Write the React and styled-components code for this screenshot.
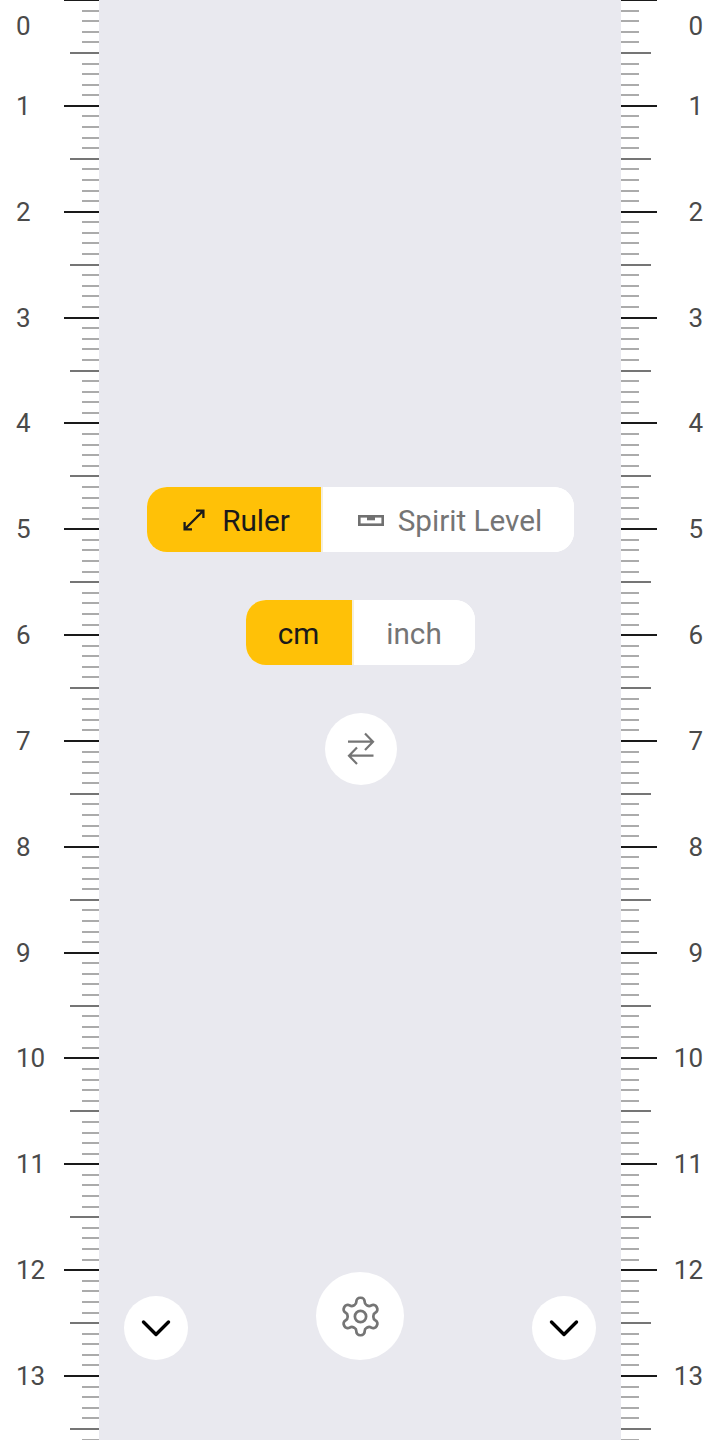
import React from "react";
import styled, { createGlobalStyle } from "styled-components";

const Global = createGlobalStyle`
  html, body { margin: 0; padding: 0; background: #fff; }
  body { font-family: Roboto, "Liberation Sans", sans-serif; }
`;

const Page = styled.div`
  width: 720px;
  height: 1440px;
  overflow: hidden;
  display: flex;
  background: #fff;
`;

const Ruler = styled.div`
  width: 99px;
  flex: none;
  height: 1440px;
  display: flex;
  flex-direction: ${(p) => (p.$mirror ? "row-reverse" : "row")};
  justify-content: space-between;
`;

const Labels = styled.div`
  display: flex;
  flex-direction: column;
  align-items: ${(p) => (p.$mirror ? "flex-end" : "flex-start")};
  padding: 0 17px 0 16px;
`;

const Label = styled.div`
  flex: none;
  height: ${(p) => (p.$first ? 52.925 : 105.85)}px;
  display: flex;
  align-items: center;
  font-size: 26px;
  color: #4a4a4a;
`;

const Ticks = styled.div`
  flex: none;
  display: flex;
  flex-direction: column;
  margin-top: -1px;
`;

const CmBlock = styled.div`
  flex: none;
  height: 105.85px;
  display: flex;
  flex-direction: column;
  align-items: ${(p) => (p.$mirror ? "flex-start" : "flex-end")};
  gap: 8.594px;
`;

const TICK = {
  major: { width: 36, color: "#1a1a1a" },
  mid: { width: 30, color: "#757575" },
  minor: { width: 18, color: "#ababab" },
};

const Tick = styled.div`
  flex: none;
  height: 2px;
  width: ${(p) => TICK[p.$kind].width - (p.$mirror ? 0 : 1)}px;
  background: ${(p) => TICK[p.$kind].color};
`;

const Panel = styled.main`
  flex: 1;
  height: 1440px;
  box-sizing: border-box;
  background: #e9e9ef;
  padding: 487px 25px 80px;
  display: flex;
  flex-direction: column;
  align-items: center;
`;

const Controls = styled.div`
  display: flex;
  flex-direction: column;
  align-items: center;
  gap: 48px;
`;

const Segmented = styled.div`
  display: flex;
  height: 65px;
  border-radius: 20px;
  overflow: hidden;
  background: #fff;
`;

const Segment = styled.div`
  width: ${(p) => p.$w}px;
  box-sizing: border-box;
  padding: 1px 0 0 ${(p) => p.$pad || 0}px;
  display: flex;
  align-items: center;
  justify-content: center;
  gap: ${(p) => p.$gap || 0}px;
  font-size: 29.7px;
  background: ${(p) => (p.$active ? "#ffc107" : "#fff")};
  color: ${(p) => (p.$active ? "#1a1a1a" : "#757575")};
  border-right: ${(p) => (p.$active ? "2px solid #f5efdc" : "none")};
`;

const Round = styled.div`
  width: ${(p) => p.$size}px;
  height: ${(p) => p.$size}px;
  border-radius: 50%;
  background: #fff;
  display: flex;
  align-items: center;
  justify-content: center;
  flex: none;
`;

const SwapRound = styled(Round)`
  margin-left: 2px;
`;

const BottomBar = styled.div`
  margin-top: auto;
  align-self: stretch;
  display: flex;
  justify-content: space-between;
  align-items: flex-end;
`;

const kinds = (i) => (i === 0 ? "major" : i === 5 ? "mid" : "minor");

function Side({ mirror }) {
  return (
    <Ruler $mirror={mirror}>
      <Labels $mirror={mirror}>
        {Array.from({ length: 14 }, (_, i) => (
          <Label key={i} $first={i === 0}>{i}</Label>
        ))}
      </Labels>
      <Ticks>
        {Array.from({ length: 14 }, (_, cm) => (
          <CmBlock key={cm} $mirror={mirror}>
            {Array.from({ length: 10 }, (_, i) => (
              <Tick key={i} $kind={kinds(i)} $mirror={mirror} />
            ))}
          </CmBlock>
        ))}
      </Ticks>
    </Ruler>
  );
}

const DiagonalIcon = () => (
  <svg width="24" height="24" viewBox="0 0 24 24" fill="none" stroke="#1a1a1a" strokeWidth="2.3">
    <path d="M2.5 21.5 21.5 2.5M14 2.6h7.4V10M2.6 14v7.4H10" />
  </svg>
);

const LevelIcon = () => (
  <svg width="26" height="11" viewBox="0 0 26 11" fill="none" stroke="#707070" strokeWidth="2.6">
    <rect x="1.3" y="1.3" width="23.4" height="8.4" />
    <rect x="9" y="1.3" width="8" height="4" fill="#707070" stroke="none" />
  </svg>
);

const SwapIcon = () => (
  <svg width="28" height="34" viewBox="0 0 28 34" fill="none" stroke="#757575" strokeWidth="2.2">
    <path d="M1 9.7h25M18 1.5l8 8.2-8 8.2" />
    <path d="M26.5 23.7H2M10 15.5l-8 8.2 8 8.2" />
  </svg>
);

const GearIcon = () => (
  <svg width="45" height="45" viewBox="0 0 24 24" fill="none" stroke="#757575" strokeWidth="1.45" strokeLinecap="round" strokeLinejoin="round">
    <path d="M12.22 2h-.44a2 2 0 0 0-2 2v.18a2 2 0 0 1-1 1.73l-.43.25a2 2 0 0 1-2 0l-.15-.08a2 2 0 0 0-2.73.73l-.22.38a2 2 0 0 0 .73 2.73l.15.1a2 2 0 0 1 1 1.72v.51a2 2 0 0 1-1 1.74l-.15.09a2 2 0 0 0-.73 2.73l.22.38a2 2 0 0 0 2.73.73l.15-.08a2 2 0 0 1 2 0l.43.25a2 2 0 0 1 1 1.73V20a2 2 0 0 0 2 2h.44a2 2 0 0 0 2-2v-.18a2 2 0 0 1 1-1.73l.43-.25a2 2 0 0 1 2 0l.15.08a2 2 0 0 0 2.73-.73l.22-.39a2 2 0 0 0-.73-2.73l-.15-.08a2 2 0 0 1-1-1.74v-.5a2 2 0 0 1 1-1.74l.15-.09a2 2 0 0 0 .73-2.73l-.22-.38a2 2 0 0 0-2.73-.73l-.15.08a2 2 0 0 1-2 0l-.43-.25a2 2 0 0 1-1-1.73V4a2 2 0 0 0-2-2z" />
    <circle cx="12" cy="12" r="3" />
  </svg>
);

const ChevronIcon = () => (
  <svg width="32" height="20" viewBox="0 0 32 20" fill="none" stroke="#000" strokeWidth="3.4" strokeLinecap="round" strokeLinejoin="round">
    <path d="M3.5 4 16 16.5 28.5 4" />
  </svg>
);

export default function App() {
  return (
    <>
      <Global />
      <Page>
        <Side />
        <Panel>
          <Controls>
            <Segmented>
              <Segment $active $w={176} $gap={16} $pad={5}><DiagonalIcon />Ruler</Segment>
              <Segment $w={251} $gap={14} $pad={4}><LevelIcon />Spirit Level</Segment>
            </Segmented>
            <Segmented>
              <Segment $active $w={108}>cm</Segment>
              <Segment $w={121}>inch</Segment>
            </Segmented>
            <SwapRound $size={72}><SwapIcon /></SwapRound>
          </Controls>
          <BottomBar>
            <Round $size={64}><ChevronIcon /></Round>
            <Round $size={88}><GearIcon /></Round>
            <Round $size={64}><ChevronIcon /></Round>
          </BottomBar>
        </Panel>
        <Side mirror />
      </Page>
    </>
  );
}
